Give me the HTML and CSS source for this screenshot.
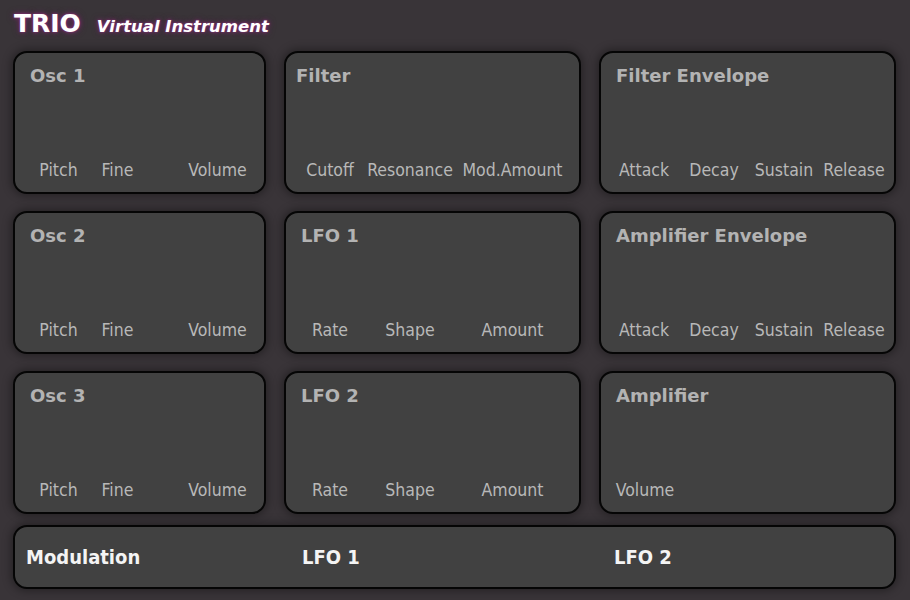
FILE: index.html
```html
<!DOCTYPE html>
<html lang="en">
<head>
<meta charset="utf-8">
<title>TRIO Virtual Instrument</title>
<link rel="stylesheet" href="styles.css">
</head>
<body>
<div class="app">
  <header class="header">
    <span class="logo">TRIO</span>
    <span class="subtitle">Virtual Instrument</span>
  </header>

  <main class="rack">
    <section class="panel">
      <h2 class="panel-title">Osc 1</h2>
      <div class="labels labels-osc"><span>Pitch</span><span>Fine</span><span class="far">Volume</span></div>
    </section>
    <section class="panel">
      <h2 class="panel-title title-tight">Filter</h2>
      <div class="labels labels-three"><span>Cutoff</span><span>Resonance</span><span>Mod.Amount</span></div>
    </section>
    <section class="panel">
      <h2 class="panel-title">Filter Envelope</h2>
      <div class="labels labels-env"><span>Attack</span><span>Decay</span><span>Sustain</span><span>Release</span></div>
    </section>

    <section class="panel">
      <h2 class="panel-title">Osc 2</h2>
      <div class="labels labels-osc"><span>Pitch</span><span>Fine</span><span class="far">Volume</span></div>
    </section>
    <section class="panel">
      <h2 class="panel-title">LFO 1</h2>
      <div class="labels labels-three"><span>Rate</span><span>Shape</span><span>Amount</span></div>
    </section>
    <section class="panel">
      <h2 class="panel-title">Amplifier Envelope</h2>
      <div class="labels labels-env"><span>Attack</span><span>Decay</span><span>Sustain</span><span>Release</span></div>
    </section>

    <section class="panel">
      <h2 class="panel-title">Osc 3</h2>
      <div class="labels labels-osc"><span>Pitch</span><span>Fine</span><span class="far">Volume</span></div>
    </section>
    <section class="panel">
      <h2 class="panel-title">LFO 2</h2>
      <div class="labels labels-three"><span>Rate</span><span>Shape</span><span>Amount</span></div>
    </section>
    <section class="panel">
      <h2 class="panel-title">Amplifier</h2>
      <div class="labels labels-single"><span>Volume</span></div>
    </section>
  </main>

  <footer class="modulation">
    <span>Modulation</span>
    <span>LFO 1</span>
    <span>LFO 2</span>
  </footer>
</div>
</body>
</html>
```

FILE: styles.css
```css
html, body {
  margin: 0;
  padding: 0;
}

body {
  width: 910px;
  height: 600px;
  overflow: hidden;
  background: #393438;
  font-family: "DejaVu Sans", Verdana, sans-serif;
}

.app {
  padding: 0 14px 0 13px;
}

.header {
  display: flex;
  align-items: baseline;
  height: 30px;
  padding: 9px 0 0 1px;
  margin-bottom: 12px;
}

.logo {
  font-size: 25px;
  line-height: 30px;
  font-weight: bold;
  color: #ffffff;
  text-shadow: 0 0 2px #8a3479, 0 0 4px #7a2e6c, 0 0 7px #5a2552;
}

.subtitle {
  margin-left: 16px;
  font-size: 16.5px;
  font-weight: bold;
  font-style: italic;
  color: #ffffff;
  text-shadow: 0 0 2px #8a3479, 0 0 4px #7a2e6c, 0 0 7px #5a2552;
}

.rack {
  display: grid;
  grid-template-columns: 253px 297px 297px;
  grid-template-rows: repeat(3, 143px);
  column-gap: 18px;
  row-gap: 17px;
}

.panel,
.modulation {
  box-sizing: border-box;
  background: #414141;
  border: 2px solid #050505;
  border-radius: 14px;
  box-shadow: 0 0 8px 2px rgba(0, 0, 0, 0.35);
}

.panel {
  display: flex;
  flex-direction: column;
  justify-content: space-between;
  padding: 12px 0 12px 0;
}

.panel-title {
  margin: 0;
  padding-left: 15px;
  font-size: 18px;
  line-height: 22px;
  font-weight: bold;
  color: #b3b3b3;
}

.title-tight {
  padding-left: 10px;
}

.labels {
  display: grid;
  justify-items: center;
  font-family: "DejaVu Sans Condensed", "DejaVu Sans", sans-serif;
  font-size: 17.5px;
  line-height: 20px;
  color: #b8b8b8;
  white-space: nowrap;
}

.labels-osc {
  grid-template-columns: 59px 59px 59px;
  padding-left: 14px;
}

.labels-osc .far {
  margin-left: 82px;
}

.labels-three {
  grid-template-columns: 80px 80px 125px;
  padding-left: 4px;
}

.labels-env {
  grid-template-columns: repeat(4, 70px);
  padding-left: 8px;
}

.labels-single {
  grid-template-columns: 70px;
  padding-left: 9px;
}

.modulation {
  display: grid;
  grid-template-columns: 276px 312px auto;
  align-items: center;
  height: 64px;
  margin-top: 11px;
  padding-left: 11px;
  font-family: "DejaVu Sans Condensed", "DejaVu Sans", sans-serif;
  font-weight: bold;
  font-size: 20px;
  color: #f4f4f4;
}
```
